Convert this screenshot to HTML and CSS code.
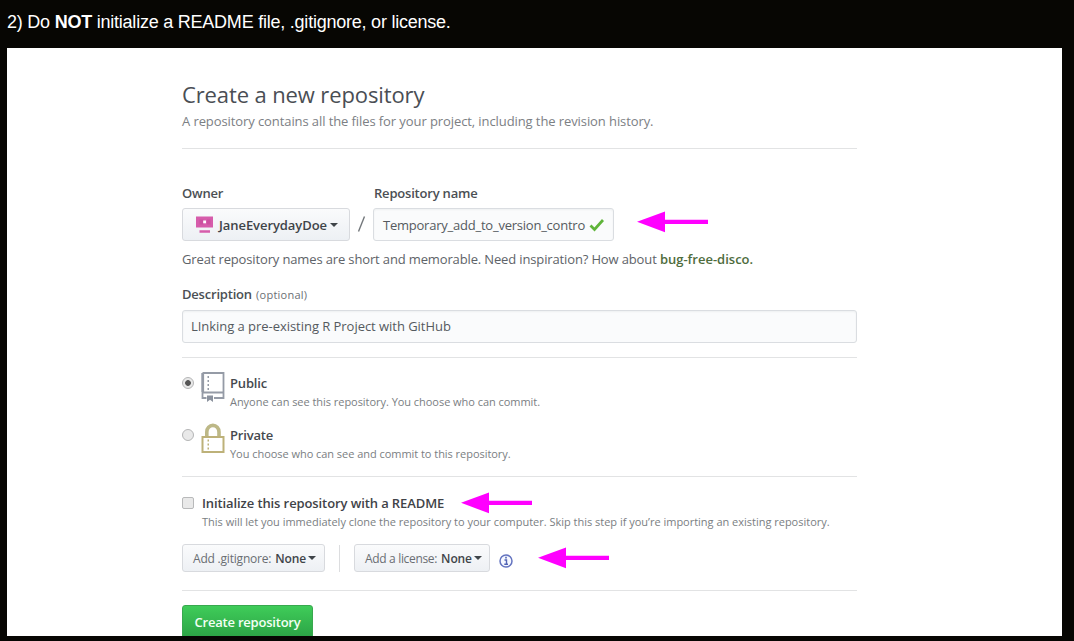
FILE: index.html
```
<!DOCTYPE html>
<html lang="en">
<head>
<meta charset="utf-8">
<title>Create a new repository</title>
<link rel="stylesheet" href="styles.css">
</head>
<body>
<p class="step">2) Do <b>NOT</b> initialize a README file, .gitignore, or license.</p>
<main class="panel">
  <form class="form">
    <header class="head">
      <h1 class="title">Create a new repository</h1>
      <p class="subtitle">A repository contains all the files for your project, including the revision history.</p>
    </header>

    <div class="names">
      <div class="field owner">
        <span class="label">Owner</span>
        <button type="button" class="btn btn-owner">
          <svg class="avatar" width="18" height="18" viewBox="0 0 18 18"><path fill="#d65cab" d="M0 0.500h17v11h-17zM3.500 14.200h10.500v2.600h-10.500z"/><path fill="#c04295" d="M3.500 3.500h4v5h-4zM11 3.500h3.500v5h-3.500z" opacity=".45"/><path fill="#fff" d="M7.200 4.500h2.800v2.800h-2.800z"/></svg>
          <span class="owner-name">JaneEverydayDoe</span><i class="caret"></i>
        </button>
      </div>
      <svg class="slash" width="10" height="18" viewBox="0 0 10 18"><path d="M1.500 16.500L7.500 1.500" stroke="#73777b" stroke-width="1.400"/></svg>
      <div class="field repo">
        <span class="label repo-label">Repository name</span>
        <div class="input input-repo">
          <span class="repo-value">Temporary_add_to_version_contro</span>
          <svg width="16" height="14" viewBox="0 0 16 14"><path d="M1.500 7.500l4 4L14 2" fill="none" stroke="#5fb43a" stroke-width="2.700"/></svg>
        </div>
      </div>
      <svg class="arrow arrow-name" width="72" height="22" viewBox="0 0 72 22"><path d="M0 10.800L28 0.500v8.300h43v4.200H28v8.300z"/></svg>
    </div>
    <p class="hint">Great repository names are short and memorable. Need inspiration? How about <b class="suggestion">bug-free-disco.</b></p>

    <div class="label desc-label">Description <span class="optional">(optional)</span></div>
    <div class="input input-desc">LInking a pre-existing R Project with GitHub</div>

    <section class="visibility">
      <div class="choice">
        <i class="radio checked"></i>
        <svg class="kind" width="24" height="32" viewBox="0 0 24 32"><g fill="none" stroke="#959ba6" stroke-width="1.800"><path d="M1.500 2H22.500V27H13M5.500 27H1.500V2M1.500 21.500H22.500"/><path d="M1.800 2V21" stroke-width="2.600"/></g><path d="M6.500 5h1.500v2h-1.500zM6.500 9h1.500v2h-1.500zM6.500 13h1.500v2h-1.500zM6.500 17h1.500v2h-1.500z" fill="#959ba6"/><path d="M6 24.500h6v6.500l-3-2.300L6 31z" fill="#8b929e"/></svg>
        <div class="choice-text"><b class="choice-title">Public</b><span class="note">Anyone can see this repository. You choose who can commit.</span></div>
      </div>
      <div class="choice">
        <i class="radio"></i>
        <svg class="kind" width="24" height="32" viewBox="0 0 24 32"><path d="M5.800 14V9a6.100 6.600 0 0 1 12.200 0V14" fill="none" stroke="#bdb887" stroke-width="3.600"/><path d="M1.500 14H22.500V29H1.500z" fill="none" stroke="#bdb179" stroke-width="2"/><path d="M6.500 16.500h1.500v2h-1.500zM6.500 20.500h1.500v2h-1.500zM6.500 24.500h1.500v2h-1.500z" fill="#bdb179"/></svg>
        <div class="choice-text"><b class="choice-title">Private</b><span class="note">You choose who can see and commit to this repository.</span></div>
      </div>
    </section>

    <section class="init">
      <div class="init-row">
        <i class="checkbox"></i><b class="init-title">Initialize this repository with a README</b>
        <svg class="arrow arrow-readme" width="72" height="22" viewBox="0 0 72 22"><path d="M0 10.800L28 0.500v8.300h43v4.200H28v8.300z"/></svg>
      </div>
      <p class="note init-note">This will let you immediately clone the repository to your computer. Skip this step if you’re importing an existing repository.</p>
      <div class="extras">
        <button type="button" class="btn btn-small btn-ignore"><span class="ignore-text">Add .gitignore:</span> <b>None</b><i class="caret"></i></button>
        <i class="divider"></i>
        <button type="button" class="btn btn-small btn-license"><span class="license-text">Add a license:</span> <b>None</b><i class="caret"></i></button>
        <svg class="info" width="16" height="16" viewBox="0 0 16 16"><circle cx="8" cy="8" r="6" fill="#f7f9ff" stroke="#6474c0" stroke-width="1.500"/><path d="M6.500 7h2v4M6.300 11.200h3.700" fill="none" stroke="#5264b5" stroke-width="1.400"/><path d="M7.200 3.800h1.600v1.600h-1.600z" fill="#5264b5"/></svg>
        <svg class="arrow arrow-extras" width="72" height="22" viewBox="0 0 72 22"><path d="M0 10.800L28 0.500v8.300h43v4.200H28v8.300z"/></svg>
      </div>
    </section>

    <button type="button" class="create">Create repository</button>
  </form>
</main>
</body>
</html>
```

FILE: styles.css
```
* { box-sizing: border-box; }
body { margin: 0; height: 641px; overflow: hidden; background: #070603; font-family: "Open Sans", "Noto Sans", sans-serif; font-size: 13px; color: #4d5257; }
p, h1 { margin: 0; }
b { font-weight: 600; }
svg { display: block; flex: none; }
button { font: inherit; color: inherit; margin: 0; }

.step { height: 48px; padding: 11px 0 0 7px; font: 18px/22px "Liberation Sans", Arial, sans-serif; letter-spacing: -0.23px; color: #fff; white-space: nowrap; }
.step b { font-weight: 700; }
.panel { width: 1055px; height: 588px; margin-left: 7px; padding: 31px 0 0 175px; overflow: hidden; background: #fff; }
.form { width: 675px; white-space: nowrap; }

.head { height: 70px; border-bottom: 1px solid #e2e3e4; }
.title { font-size: 22px; font-weight: 400; line-height: 30px; letter-spacing: -0.12px; color: #4a4e54; }
.subtitle { line-height: 18px; margin-top: 3px; letter-spacing: -0.09px; color: #7c8084; }

.names { display: flex; align-items: flex-end; height: 92px; }
.label { font-weight: 600; line-height: 18px; letter-spacing: -0.2px; color: #4b4f54; }
.repo-label { padding-left: 1px; }
.field { display: flex; flex-direction: column; gap: 6px; }
.btn { display: flex; align-items: center; border: 1px solid #d8dade; border-radius: 3px; background: linear-gradient(#fafbfc, #edf0f4); color: #3f4449; }
.btn-owner { width: 168px; height: 33px; padding: 0 0 0 13px; }
.avatar { margin-right: 5px; }
.owner-name { font-weight: 600; letter-spacing: -0.07px; }
.caret { border: 4px solid transparent; border-top-color: currentColor; border-bottom: 0; margin-left: 3px; }
.slash { margin: 0 6px 8px 7px; }
.input { display: flex; align-items: center; border: 1px solid #dadde1; border-radius: 3px; background: #fafbfc; box-shadow: inset 0 1px 2px #1b1f230d; color: #555a5f; }
.input-repo { width: 241px; height: 33px; padding: 0 8px 0 9px; justify-content: space-between; }
.repo-value { letter-spacing: -0.23px; }
.arrow { fill: #f0f; }
.arrow-name { margin: 0 0 8px 23px; }
.hint { line-height: 18px; margin-top: 9px; letter-spacing: -0.14px; color: #5e6368; }
.suggestion { letter-spacing: 0; color: #4e6c3d; }

.desc-label { margin-top: 17px; }
.optional { margin-left: 1px; font-size: 11px; font-weight: 400; letter-spacing: 0.25px; color: #6b6f74; }
.input-desc { width: 675px; height: 33px; margin-top: 6px; padding: 0 0 1px 8px; letter-spacing: -0.04px; }

.visibility { height: 120px; margin-top: 14px; padding-top: 13px; border-top: 1px solid #e2e3e4; border-bottom: 1px solid #e2e3e4; }
.choice { display: flex; height: 52px; }
.radio { width: 12px; height: 12px; margin: 6px 7px 0 0; border: 1px solid #b4b5b6; border-radius: 50%; background: #e9e9e9; }
.checked { background: radial-gradient(circle, #555 0 2.5px, #e8e8e8 3.2px); }
.kind { margin-right: 5px; }
.choice-text { display: flex; flex-direction: column; padding-top: 3px; }
.choice-title { line-height: 18px; letter-spacing: -0.17px; color: #45494e; }
.note { font-size: 11px; line-height: 18px; margin-top: 1px; letter-spacing: -0.04px; color: #7a7e82; }

.init { height: 114px; padding-top: 15px; border-bottom: 1px solid #e2e3e4; }
.init-row { display: flex; align-items: center; height: 22px; }
.checkbox { width: 12px; height: 12px; margin-right: 8px; border: 1px solid #b8b9ba; border-radius: 2px; background: #e9e9e9; }
.init-title { padding-bottom: 1px; line-height: 18px; letter-spacing: -0.1px; color: #3f4348; }
.arrow-readme { margin-left: 17px; }
.init-note { margin: -1px 0 0 20px; letter-spacing: -0.01px; }
.extras { display: flex; align-items: center; height: 28px; margin-top: 13px; }
.btn-small { height: 28px; padding: 0 0 0 10px; font-size: 12px; white-space: pre; }
.btn-small span { color: #6a6e73; }
.ignore-text { letter-spacing: -0.2px; }
.license-text { letter-spacing: -0.33px; }
.btn-ignore { width: 143px; }
.btn-license { width: 136px; }
.btn-small b { margin-left: 4px; letter-spacing: -0.1px; }
.btn-small .caret { margin-left: 2px; }
.divider { width: 1px; height: 27px; margin: 0 14px 0 14px; background: #dcdddf; }
.info { margin: 6px 0 0 8px; }
.arrow-extras { margin-left: 24px; }

.create { display: block; width: 131px; height: 36px; margin-top: 14px; padding: 0 0 3px; border: 1px solid #38a84e; border-radius: 3px; background: linear-gradient(#3fcc59, #2aa044); color: #f3fff4; font-weight: 600; letter-spacing: -0.21px; }
```
